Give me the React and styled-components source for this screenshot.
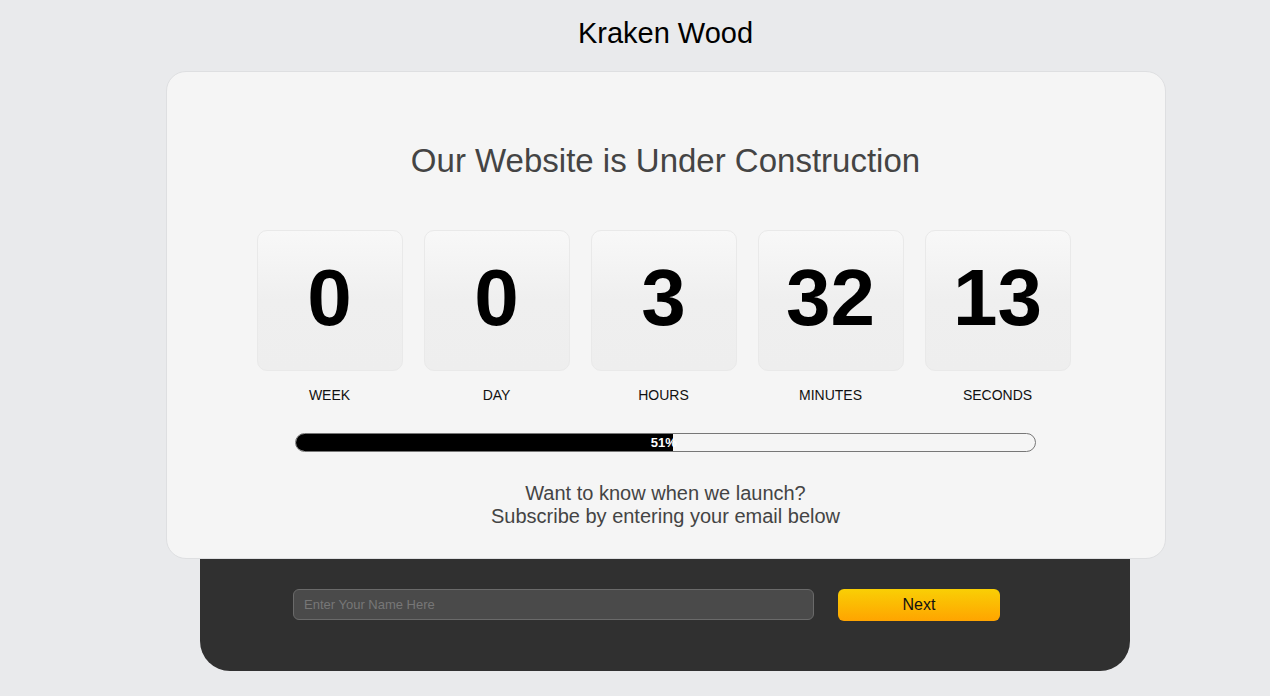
import styled, { createGlobalStyle } from "styled-components";

const GlobalStyle = createGlobalStyle`
    body {
        margin: 0;
        background: #e9eaec;
        font-family: "Liberation Sans", Arial, sans-serif;
    }
`;

const units = [
    { value: 0, label: "WEEK" },
    { value: 0, label: "DAY" },
    { value: 3, label: "HOURS" },
    { value: 32, label: "MINUTES" },
    { value: 13, label: "SECONDS" },
];

const progress = 51;

export default function App() {
    return (
        <>
            <GlobalStyle />
            <Page>
                <Brand>Kraken Wood</Brand>
                <Card>
                    <Heading>Our Website is Under Construction</Heading>
                    <Countdown>
                        {units.map((u) => (
                            <Unit key={u.label}>
                                <Tile>{u.value}</Tile>
                                <Label>{u.label}</Label>
                            </Unit>
                        ))}
                    </Countdown>
                    <Bar>
                        <Fill style={{ width: `${progress}%` }}>
                            <Percent>{progress}%</Percent>
                        </Fill>
                    </Bar>
                    <Subscribe>
                        Want to know when we launch?
                        <br />
                        Subscribe by entering your email below
                    </Subscribe>
                </Card>
                <Footer>
                    <Form onSubmit={(e) => e.preventDefault()}>
                        <NameInput placeholder="Enter Your Name Here" />
                        <NextButton type="submit">Next</NextButton>
                    </Form>
                </Footer>
            </Page>
        </>
    );
}

const Page = styled.div`
    display: flex;
    flex-direction: column;
    align-items: center;
    padding-left: 61px;
`;

const Brand = styled.h1`
    margin: 17px 0 22px;
    font-size: 29px;
    line-height: 32px;
    font-weight: normal;
    color: #000;
`;

const Card = styled.div`
    position: relative;
    z-index: 1;
    box-sizing: border-box;
    width: 1000px;
    padding: 70px 0 30px;
    background: #f5f5f5;
    border: 1px solid #dedfe1;
    border-radius: 20px;
    display: flex;
    flex-direction: column;
    align-items: center;
`;

const Heading = styled.h2`
    margin: 0 0 50px;
    font-size: 33px;
    line-height: 38px;
    font-weight: normal;
    color: #444;
`;

const Countdown = styled.div`
    display: flex;
    gap: 21px;
    margin-left: -4px;
`;

const Unit = styled.div`
    display: flex;
    flex-direction: column;
    align-items: center;
`;

const Tile = styled.div`
    box-sizing: border-box;
    width: 146px;
    height: 141px;
    display: flex;
    align-items: center;
    justify-content: center;
    border: 1px solid #e9e9e9;
    border-radius: 10px;
    background: linear-gradient(#f8f8f8 0%, #efefef 50%, #eeeeee 100%);
    font-size: 80px;
    font-weight: bold;
    color: #000;
    padding-bottom: 6px;
`;

const Label = styled.div`
    margin-top: 16px;
    font-size: 14px;
    line-height: 16px;
    color: #111;
`;

const Bar = styled.div`
    box-sizing: border-box;
    width: 741px;
    height: 19px;
    margin-top: 30px;
    border: 1px solid #777;
    border-radius: 10px;
    overflow: hidden;
`;

const Fill = styled.div`
    height: 100%;
    background: #000;
    position: relative;
`;

const Percent = styled.span`
    position: absolute;
    right: -4px;
    top: 0;
    line-height: 17px;
    font-size: 13px;
    font-weight: bold;
    color: #fff;
`;

const Subscribe = styled.p`
    margin: 30px 0 0;
    font-size: 20px;
    line-height: 23px;
    color: #444;
    text-align: center;
`;

const Footer = styled.div`
    box-sizing: border-box;
    width: 930px;
    height: 113px;
    margin-top: -1px;
    margin-left: -1px;
    padding: 31px 0 0 93px;
    background: #303030;
    border-radius: 0 0 30px 30px;
`;

const Form = styled.form`
    display: flex;
    gap: 24px;
    align-items: flex-start;
`;

const NameInput = styled.input`
    box-sizing: border-box;
    width: 521px;
    height: 31px;
    padding: 0 10px;
    background: #4a4a4a;
    border: 1px solid #6a6a6a;
    border-radius: 6px;
    font-family: "Liberation Sans", Arial, sans-serif;
    font-size: 13px;
    color: #ddd;
    outline: none;

    &::placeholder {
        color: #777;
    }
`;

const NextButton = styled.button`
    width: 162px;
    height: 32px;
    border: none;
    border-radius: 6px;
    background: linear-gradient(#f9cf05, #ffa400);
    font-family: "Liberation Sans", Arial, sans-serif;
    font-size: 16px;
    color: #111;
    cursor: pointer;
`;
